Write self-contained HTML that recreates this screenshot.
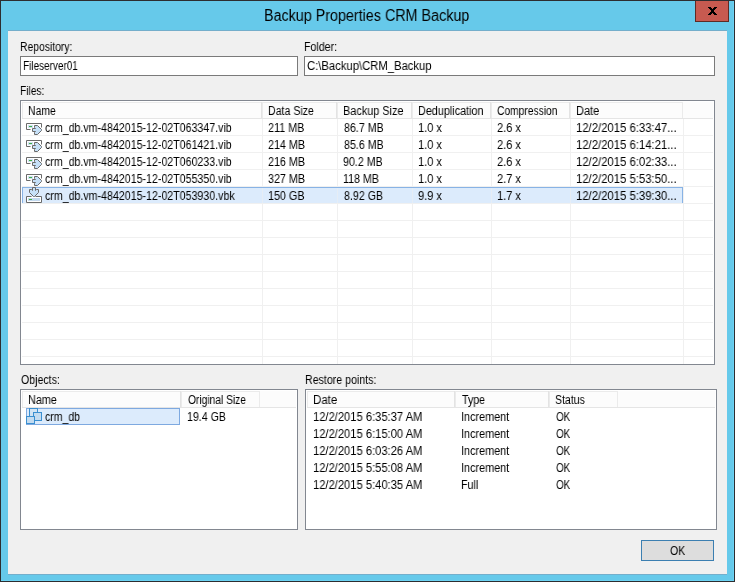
<!DOCTYPE html>
<html><head><meta charset="utf-8"><style>
html,body{margin:0;padding:0;width:735px;height:582px;overflow:hidden;background:#f0f0f0}
.t{position:absolute;font:12px 'Liberation Sans', sans-serif;line-height:12px;color:#000;white-space:pre;letter-spacing:0.0px;transform-origin:0 0;will-change:transform}
</style></head><body>
<div style="position:absolute;left:0px;top:0px;width:735px;height:582px;background:#2d2d30"></div>
<div style="position:absolute;left:1px;top:1px;width:733px;height:580px;background:#66c9ea"></div>
<div style="position:absolute;left:8px;top:30px;width:719px;height:1px;background:#74aecb"></div>
<div style="position:absolute;left:8px;top:574px;width:719px;height:1px;background:#74aecb"></div>
<div style="position:absolute;left:1px;top:580px;width:733px;height:1px;background:#6cd3f3"></div>
<div style="position:absolute;left:733px;top:1px;width:1px;height:580px;background:#6cd3f3"></div>
<div style="position:absolute;left:8px;top:31px;width:719px;height:543px;background:#f0f0f0"></div>
<div style="position:absolute;left:695px;top:1px;width:34px;height:21px;background:#c75a50;border:1px solid #5e2a24;box-sizing:border-box;border-top:none"></div>
<svg style="position:absolute;left:704px;top:4px" width="18" height="14" viewBox="0 0 18 14"><path d="M4 3h3v1h-3ZM10 3h3v1h-3ZM5 4h3v1h-3ZM9 4h3v1h-3ZM6 5h5v1h-5ZM7 6h3v1h-3ZM7 7h3v1h-3ZM6 8h5v1h-5ZM5 9h3v1h-3ZM9 9h3v1h-3ZM4 10h3v1h-3ZM10 10h3v1h-3Z" fill="#000"/></svg>
<div class="t" style="left:264.11px;top:8px;font-size:16px;line-height:16px;transform:scaleX(0.8947)">Backup Properties CRM Backup</div>
<div class="t" style="left:20.14px;top:41px;transform:scaleX(0.8644)">Repository:</div>
<div class="t" style="left:304.11px;top:41px;transform:scaleX(0.8857)">Folder:</div>
<div class="t" style="left:20.15px;top:85px;transform:scaleX(0.8519)">Files:</div>
<div class="t" style="left:21.00px;top:374px;transform:scaleX(0.8837)">Objects:</div>
<div class="t" style="left:305.11px;top:374px;transform:scaleX(0.8861)">Restore points:</div>
<div style="position:absolute;left:20px;top:56px;width:278px;height:20px;background:#fff;border:1px solid #7a7a7a;box-sizing:border-box"></div>
<div class="t" style="left:23.17px;top:60px;transform:scaleX(0.8308)">Fileserver01</div>
<div style="position:absolute;left:304px;top:56px;width:411px;height:20px;background:#fff;border:1px solid #7a7a7a;box-sizing:border-box"></div>
<div class="t" style="left:307.06px;top:60px;transform:scaleX(0.9389)">C:\Backup\CRM_Backup</div>
<div style="position:absolute;left:20px;top:100px;width:695px;height:265px;background:#fff;border:1px solid #828790;box-sizing:border-box"></div>
<div style="position:absolute;left:22px;top:102px;width:691px;height:16px;background:#fcfcfc"></div>
<div style="position:absolute;left:22px;top:102px;width:240px;height:17px;background:#fcfcfc;border:1px solid #ebebeb;box-sizing:border-box"></div>
<div style="position:absolute;left:262px;top:102px;width:75px;height:17px;background:#fcfcfc;border:1px solid #ebebeb;box-sizing:border-box"></div>
<div style="position:absolute;left:337px;top:102px;width:75px;height:17px;background:#fcfcfc;border:1px solid #ebebeb;box-sizing:border-box"></div>
<div style="position:absolute;left:412px;top:102px;width:79px;height:17px;background:#fcfcfc;border:1px solid #ebebeb;box-sizing:border-box"></div>
<div style="position:absolute;left:491px;top:102px;width:79px;height:17px;background:#fcfcfc;border:1px solid #ebebeb;box-sizing:border-box"></div>
<div style="position:absolute;left:570px;top:102px;width:113px;height:17px;background:#fcfcfc;border:1px solid #ebebeb;box-sizing:border-box"></div>
<div style="position:absolute;left:22px;top:118px;width:691px;height:1px;background:#e5e5e5"></div>
<div style="position:absolute;left:261px;top:102px;width:1px;height:16px;background:#e3e3e3"></div>
<div style="position:absolute;left:336px;top:102px;width:1px;height:16px;background:#e3e3e3"></div>
<div style="position:absolute;left:411px;top:102px;width:1px;height:16px;background:#e3e3e3"></div>
<div style="position:absolute;left:490px;top:102px;width:1px;height:16px;background:#e3e3e3"></div>
<div style="position:absolute;left:569px;top:102px;width:1px;height:16px;background:#e3e3e3"></div>
<div style="position:absolute;left:22px;top:135px;width:691px;height:1px;background:#f0f0f0"></div>
<div style="position:absolute;left:22px;top:152px;width:691px;height:1px;background:#f0f0f0"></div>
<div style="position:absolute;left:22px;top:169px;width:691px;height:1px;background:#f0f0f0"></div>
<div style="position:absolute;left:22px;top:186px;width:691px;height:1px;background:#f0f0f0"></div>
<div style="position:absolute;left:22px;top:203px;width:691px;height:1px;background:#f0f0f0"></div>
<div style="position:absolute;left:22px;top:220px;width:691px;height:1px;background:#f0f0f0"></div>
<div style="position:absolute;left:22px;top:237px;width:691px;height:1px;background:#f0f0f0"></div>
<div style="position:absolute;left:22px;top:254px;width:691px;height:1px;background:#f0f0f0"></div>
<div style="position:absolute;left:22px;top:271px;width:691px;height:1px;background:#f0f0f0"></div>
<div style="position:absolute;left:22px;top:288px;width:691px;height:1px;background:#f0f0f0"></div>
<div style="position:absolute;left:22px;top:305px;width:691px;height:1px;background:#f0f0f0"></div>
<div style="position:absolute;left:22px;top:322px;width:691px;height:1px;background:#f0f0f0"></div>
<div style="position:absolute;left:22px;top:339px;width:691px;height:1px;background:#f0f0f0"></div>
<div style="position:absolute;left:22px;top:356px;width:691px;height:1px;background:#f0f0f0"></div>
<div style="position:absolute;left:262px;top:119px;width:1px;height:245px;background:#f0f0f0"></div>
<div style="position:absolute;left:337px;top:119px;width:1px;height:245px;background:#f0f0f0"></div>
<div style="position:absolute;left:412px;top:119px;width:1px;height:245px;background:#f0f0f0"></div>
<div style="position:absolute;left:491px;top:119px;width:1px;height:245px;background:#f0f0f0"></div>
<div style="position:absolute;left:570px;top:119px;width:1px;height:245px;background:#f0f0f0"></div>
<div style="position:absolute;left:683px;top:119px;width:1px;height:245px;background:#f0f0f0"></div>
<div style="position:absolute;left:22px;top:187px;width:661px;height:16px;background:#dcebfc;border:1px solid #88b3e5;border-bottom:none;box-sizing:border-box"></div>
<div style="position:absolute;left:262px;top:188px;width:1px;height:15px;background:#e6edf5"></div>
<div style="position:absolute;left:337px;top:188px;width:1px;height:15px;background:#e6edf5"></div>
<div style="position:absolute;left:412px;top:188px;width:1px;height:15px;background:#e6edf5"></div>
<div style="position:absolute;left:491px;top:188px;width:1px;height:15px;background:#e6edf5"></div>
<div style="position:absolute;left:570px;top:188px;width:1px;height:15px;background:#e6edf5"></div>
<div class="t" style="left:28.13px;top:105px;transform:scaleX(0.8710)">Name</div>
<div class="t" style="left:268.12px;top:105px;transform:scaleX(0.8824)">Data Size</div>
<div class="t" style="left:343.09px;top:105px;transform:scaleX(0.9077)">Backup Size</div>
<div class="t" style="left:418.10px;top:105px;transform:scaleX(0.9014)">Deduplication</div>
<div class="t" style="left:497.14px;top:105px;transform:scaleX(0.8551)">Compression</div>
<div class="t" style="left:576.08px;top:105px;transform:scaleX(0.9167)">Date</div>
<svg style="position:absolute;left:24px;top:119px" width="20" height="18" viewBox="0 0 20 18"><path d="M2.5 10.5V4.5H17.5V8.5 M2.5 10.5H6.5" fill="none" stroke="#6a6a6a" stroke-width="1"/><rect x="4" y="6" width="5" height="3" fill="#cfe0f2"/><rect x="5" y="7" width="3" height="1" fill="#3cb043"/><path d="M8.5 9.5H11.5L10.5 8.5V6.5H13.5L17.5 10.5V11.5L13.5 15.5H10.5V13.5L11.5 12.5H8.5Z" fill="#c6e0f7" stroke="#6a6a6a" stroke-width="1"/></svg>
<div class="t" style="left:45.00px;top:122px;transform:scaleX(0.8857)">crm_db.vm-4842015-12-02T063347.vib</div>
<div class="t" style="left:268.10px;top:122px;transform:scaleX(0.8974)">211 MB</div>
<div class="t" style="left:344.00px;top:122px;transform:scaleX(0.8864)">86.7 MB</div>
<div class="t" style="left:418.08px;top:122px;transform:scaleX(0.9200)">1.0 x</div>
<div class="t" style="left:497.08px;top:122px;transform:scaleX(0.9200)">2.6 x</div>
<div class="t" style="left:576.06px;top:122px;transform:scaleX(0.9429)">12/2/2015 6:33:47...</div>
<svg style="position:absolute;left:24px;top:136px" width="20" height="18" viewBox="0 0 20 18"><path d="M2.5 10.5V4.5H17.5V8.5 M2.5 10.5H6.5" fill="none" stroke="#6a6a6a" stroke-width="1"/><rect x="4" y="6" width="5" height="3" fill="#cfe0f2"/><rect x="5" y="7" width="3" height="1" fill="#3cb043"/><path d="M8.5 9.5H11.5L10.5 8.5V6.5H13.5L17.5 10.5V11.5L13.5 15.5H10.5V13.5L11.5 12.5H8.5Z" fill="#c6e0f7" stroke="#6a6a6a" stroke-width="1"/></svg>
<div class="t" style="left:45.00px;top:139px;transform:scaleX(0.8857)">crm_db.vm-4842015-12-02T061421.vib</div>
<div class="t" style="left:268.10px;top:139px;transform:scaleX(0.8974)">214 MB</div>
<div class="t" style="left:344.00px;top:139px;transform:scaleX(0.8864)">85.6 MB</div>
<div class="t" style="left:418.08px;top:139px;transform:scaleX(0.9200)">1.0 x</div>
<div class="t" style="left:497.08px;top:139px;transform:scaleX(0.9200)">2.6 x</div>
<div class="t" style="left:576.06px;top:139px;transform:scaleX(0.9429)">12/2/2015 6:14:21...</div>
<svg style="position:absolute;left:24px;top:153px" width="20" height="18" viewBox="0 0 20 18"><path d="M2.5 10.5V4.5H17.5V8.5 M2.5 10.5H6.5" fill="none" stroke="#6a6a6a" stroke-width="1"/><rect x="4" y="6" width="5" height="3" fill="#cfe0f2"/><rect x="5" y="7" width="3" height="1" fill="#3cb043"/><path d="M8.5 9.5H11.5L10.5 8.5V6.5H13.5L17.5 10.5V11.5L13.5 15.5H10.5V13.5L11.5 12.5H8.5Z" fill="#c6e0f7" stroke="#6a6a6a" stroke-width="1"/></svg>
<div class="t" style="left:45.00px;top:156px;transform:scaleX(0.8857)">crm_db.vm-4842015-12-02T060233.vib</div>
<div class="t" style="left:268.10px;top:156px;transform:scaleX(0.8974)">216 MB</div>
<div class="t" style="left:343.11px;top:156px;transform:scaleX(0.8864)">90.2 MB</div>
<div class="t" style="left:418.08px;top:156px;transform:scaleX(0.9200)">1.0 x</div>
<div class="t" style="left:497.08px;top:156px;transform:scaleX(0.9200)">2.6 x</div>
<div class="t" style="left:576.06px;top:156px;transform:scaleX(0.9429)">12/2/2015 6:02:33...</div>
<svg style="position:absolute;left:24px;top:170px" width="20" height="18" viewBox="0 0 20 18"><path d="M2.5 10.5V4.5H17.5V8.5 M2.5 10.5H6.5" fill="none" stroke="#6a6a6a" stroke-width="1"/><rect x="4" y="6" width="5" height="3" fill="#cfe0f2"/><rect x="5" y="7" width="3" height="1" fill="#3cb043"/><path d="M8.5 9.5H11.5L10.5 8.5V6.5H13.5L17.5 10.5V11.5L13.5 15.5H10.5V13.5L11.5 12.5H8.5Z" fill="#c6e0f7" stroke="#6a6a6a" stroke-width="1"/></svg>
<div class="t" style="left:45.00px;top:173px;transform:scaleX(0.8857)">crm_db.vm-4842015-12-02T055350.vib</div>
<div class="t" style="left:268.10px;top:173px;transform:scaleX(0.8974)">327 MB</div>
<div class="t" style="left:343.11px;top:173px;transform:scaleX(0.8864)">118 MB</div>
<div class="t" style="left:418.08px;top:173px;transform:scaleX(0.9200)">1.0 x</div>
<div class="t" style="left:497.08px;top:173px;transform:scaleX(0.9200)">2.7 x</div>
<div class="t" style="left:576.06px;top:173px;transform:scaleX(0.9429)">12/2/2015 5:53:50...</div>
<svg style="position:absolute;left:24px;top:185px" width="20" height="20" viewBox="0 0 20 20"><path d="M7.5 11.5H2.5V17.5H17.5V11.5H11.5" fill="#fff" stroke="#6a6a6a" stroke-width="1"/><rect x="4" y="13" width="12" height="3" fill="#c3d9ef"/><rect x="5" y="14" width="3" height="1" fill="#3cb043"/><path d="M8.5 2.5H11.5V5.5L12.5 4.5H14.5V7.5L10.5 11.5H9.5L5.5 7.5V4.5H7.5L8.5 5.5Z" fill="#c6e0f7" stroke="#6a6a6a" stroke-width="1"/></svg>
<div class="t" style="left:45.00px;top:190px;transform:scaleX(0.8857)">crm_db.vm-4842015-12-02T053930.vbk</div>
<div class="t" style="left:268.10px;top:190px;transform:scaleX(0.8974)">150 GB</div>
<div class="t" style="left:344.00px;top:190px;transform:scaleX(0.8864)">8.92 GB</div>
<div class="t" style="left:418.08px;top:190px;transform:scaleX(0.9200)">9.9 x</div>
<div class="t" style="left:497.08px;top:190px;transform:scaleX(0.9200)">1.7 x</div>
<div class="t" style="left:576.06px;top:190px;transform:scaleX(0.9429)">12/2/2015 5:39:30...</div>
<div style="position:absolute;left:20px;top:389px;width:278px;height:141px;background:#fff;border:1px solid #828790;box-sizing:border-box"></div>
<div style="position:absolute;left:22px;top:391px;width:274px;height:16px;background:#fcfcfc"></div>
<div style="position:absolute;left:22px;top:391px;width:159px;height:17px;background:#fcfcfc;border:1px solid #ebebeb;box-sizing:border-box"></div>
<div style="position:absolute;left:181px;top:391px;width:79px;height:17px;background:#fcfcfc;border:1px solid #ebebeb;box-sizing:border-box"></div>
<div style="position:absolute;left:22px;top:407px;width:274px;height:1px;background:#e5e5e5"></div>
<div style="position:absolute;left:180px;top:391px;width:1px;height:16px;background:#e3e3e3"></div>
<div style="position:absolute;left:26px;top:408px;width:154px;height:17px;background:#dcebfc;border:1px solid #7ea9e0;box-sizing:border-box"></div>
<svg style="position:absolute;left:26px;top:408px" width="16" height="16" viewBox="0 0 16 16"><rect x="3.5" y="0.5" width="8" height="8" fill="#d2e4f4" stroke="#3a8fd0"/><rect x="7.5" y="4.5" width="8" height="8" fill="#c3dbf0" stroke="#3a8fd0"/><rect x="0.5" y="8.5" width="8" height="7" fill="#c3dbf0" stroke="#3a8fd0"/></svg>
<div class="t" style="left:28.10px;top:394px;transform:scaleX(0.9032)">Name</div>
<div class="t" style="left:188.00px;top:394px;transform:scaleX(0.8529)">Original Size</div>
<div class="t" style="left:45.00px;top:411px;transform:scaleX(0.8750)">crm_db</div>
<div class="t" style="left:187.12px;top:411px;transform:scaleX(0.8837)">19.4 GB</div>
<div style="position:absolute;left:305px;top:389px;width:412px;height:141px;background:#fff;border:1px solid #828790;box-sizing:border-box"></div>
<div style="position:absolute;left:307px;top:391px;width:408px;height:16px;background:#fcfcfc"></div>
<div style="position:absolute;left:307px;top:391px;width:148px;height:17px;background:#fcfcfc;border:1px solid #ebebeb;box-sizing:border-box"></div>
<div style="position:absolute;left:455px;top:391px;width:94px;height:17px;background:#fcfcfc;border:1px solid #ebebeb;box-sizing:border-box"></div>
<div style="position:absolute;left:549px;top:391px;width:69px;height:17px;background:#fcfcfc;border:1px solid #ebebeb;box-sizing:border-box"></div>
<div style="position:absolute;left:307px;top:407px;width:408px;height:1px;background:#e5e5e5"></div>
<div style="position:absolute;left:454px;top:391px;width:1px;height:16px;background:#e3e3e3"></div>
<div style="position:absolute;left:548px;top:391px;width:1px;height:16px;background:#e3e3e3"></div>
<div class="t" style="left:313.04px;top:394px;transform:scaleX(0.9583)">Date</div>
<div class="t" style="left:462.00px;top:394px;transform:scaleX(0.8846)">Type</div>
<div class="t" style="left:555.12px;top:394px;transform:scaleX(0.8788)">Status</div>
<div class="t" style="left:313.07px;top:411px;transform:scaleX(0.9310)">12/2/2015 6:35:37 AM</div>
<div class="t" style="left:461.10px;top:411px;transform:scaleX(0.9038)">Increment</div>
<div class="t" style="left:556.00px;top:411px;transform:scaleX(0.8235)">OK</div>
<div class="t" style="left:313.07px;top:428px;transform:scaleX(0.9310)">12/2/2015 6:15:00 AM</div>
<div class="t" style="left:461.10px;top:428px;transform:scaleX(0.9038)">Increment</div>
<div class="t" style="left:556.00px;top:428px;transform:scaleX(0.8235)">OK</div>
<div class="t" style="left:313.07px;top:445px;transform:scaleX(0.9310)">12/2/2015 6:03:26 AM</div>
<div class="t" style="left:461.10px;top:445px;transform:scaleX(0.9038)">Increment</div>
<div class="t" style="left:556.00px;top:445px;transform:scaleX(0.8235)">OK</div>
<div class="t" style="left:313.07px;top:462px;transform:scaleX(0.9310)">12/2/2015 5:55:08 AM</div>
<div class="t" style="left:461.10px;top:462px;transform:scaleX(0.9038)">Increment</div>
<div class="t" style="left:556.00px;top:462px;transform:scaleX(0.8235)">OK</div>
<div class="t" style="left:313.07px;top:479px;transform:scaleX(0.9310)">12/2/2015 5:40:35 AM</div>
<div class="t" style="left:461.11px;top:479px;transform:scaleX(0.8889)">Full</div>
<div class="t" style="left:556.00px;top:479px;transform:scaleX(0.8235)">OK</div>
<div style="position:absolute;left:641px;top:540px;width:73px;height:21px;background:#dddddd;border:1px solid #3c7fb1;box-sizing:border-box"></div>
<div class="t" style="left:670.00px;top:545px;transform:scaleX(0.8824)">OK</div>
</body></html>
